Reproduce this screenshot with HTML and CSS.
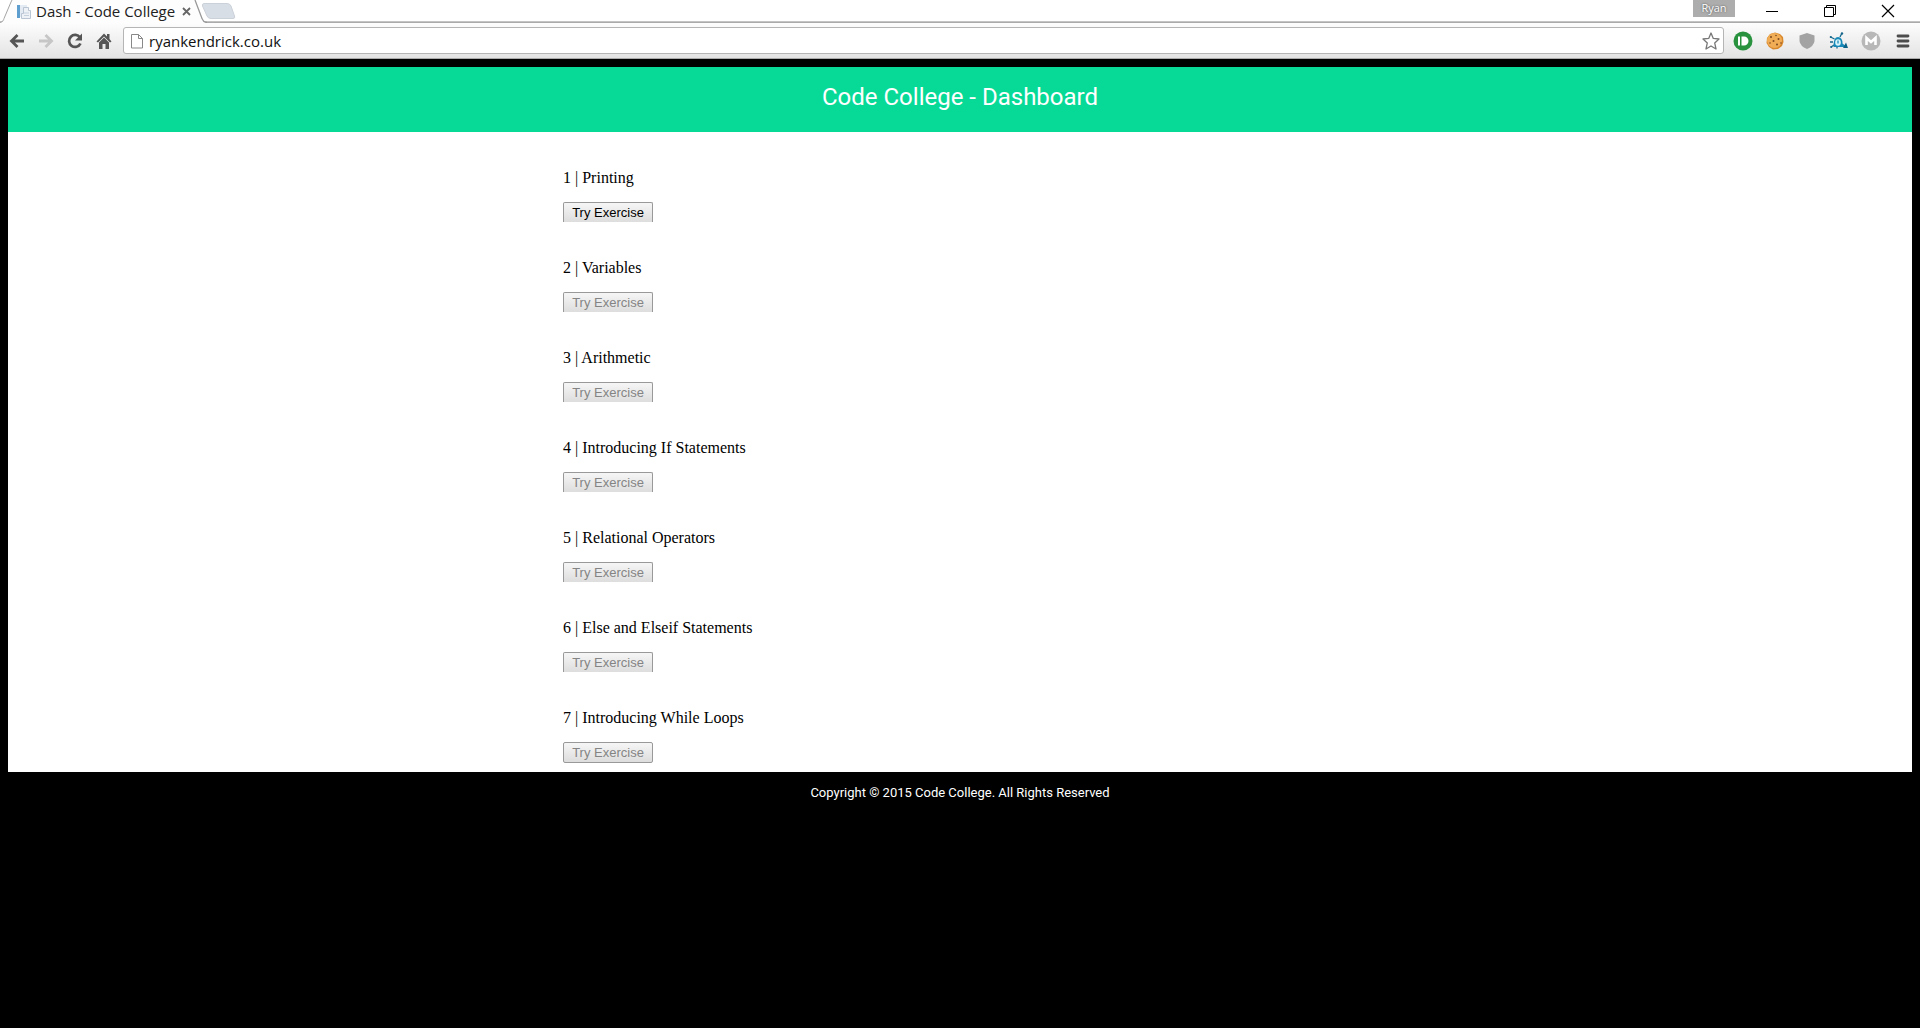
FILE: index.html
```html
<!DOCTYPE html>
<html lang="en">
<head>
<meta charset="utf-8">
<title>Dash - Code College</title>
<link rel="stylesheet" href="styles.css">
</head>
<body>
<div class="browser">
  <div class="tabstrip">
    <svg class="tab-edge" viewBox="0 0 14 23"><path d="M0 22.5C3 22 3.500 20 4 18.500L11 2L12 0H14V23H0Z" fill="#fdfdfd"/><path d="M0 22.500C3 22 3.500 20 4 18.500L11 2L12 0" fill="none" stroke="#a5a5a5"/></svg>
    <div class="tab">
      <svg class="favicon" viewBox="0 0 16 16"><path d="M1 1h3v13H1z" fill="#5f9fd0"/><path d="M4 1h7v12H4z" fill="#e4ebf3"/><path d="M7.500 3.500h5v3h2v8h-9v-5h2z" fill="#eef2f7" stroke="#b9c5d3"/><path d="M8 9h5M8 11.500h5" stroke="#c5d0dd"/></svg>
      <span class="tab-title">Dash - Code College</span>
      <button class="tab-close" aria-label="Close tab"><svg viewBox="0 0 9 9"><path d="M1 1l7 7M8 1L1 8" stroke="#666" stroke-width="1.800"/></svg></button>
    </div>
    <svg class="tab-edge" viewBox="0 0 14 23"><path d="M2 0L9 18.500C10 21 11 22 14 22.500V23H0V0Z" fill="#fdfdfd"/><path d="M2 0L9 18.500C10 21 11 22.500 14 22.500" fill="none" stroke="#999" stroke-width="1.300"/></svg>
    <button class="new-tab" aria-label="New tab"><svg viewBox="0 0 34 18"><path d="M2 .5H25Q28 .500 29 3L32.500 13Q33.500 15.500 31 15.500H9Q6 15.500 5 13L.500 3Q0 .500 2 .500Z" fill="#d8dee6" stroke="#cbd1d8"/></svg></button>
    <div class="window-controls">
      <span class="profile">Ryan</span>
      <button aria-label="Minimize"><svg viewBox="0 0 14 14"><path d="M1 7.500h12" stroke="#000"/></svg></button>
      <button aria-label="Restore"><svg viewBox="0 0 14 14"><path d="M1.500 3.500h9v9h-9zM3.500 3.500v-2h9v9h-2" fill="none" stroke="#000"/></svg></button>
      <button aria-label="Close"><svg viewBox="0 0 14 14"><path d="M1 1l12 12M13 1L1 13" stroke="#000" stroke-width="1.200"/></svg></button>
    </div>
  </div>
  <div class="toolbar">
    <div class="nav">
      <button aria-label="Back"><svg viewBox="0 0 18 18"><path d="M16 9H4M9.500 3L3.500 9l6 6" fill="none" stroke="#555" stroke-width="2.800"/></svg></button>
      <button aria-label="Forward"><svg viewBox="0 0 18 18"><path d="M2 9h12M8.500 3l6 6l-6 6" fill="none" stroke="#c6c6c6" stroke-width="2.800"/></svg></button>
      <button aria-label="Reload"><svg viewBox="0 0 18 18"><path d="M14 5.500A6 6 0 1 0 14.500 11.500" fill="none" stroke="#555" stroke-width="2.700"/><path d="M16 1.500v7H9z" fill="#555"/></svg></button>
      <button aria-label="Home"><svg viewBox="0 0 18 18"><path d="M9 1.500L1.500 9.500L3 10.500L9 4.500L15 10.500L16.500 9.500L14.500 7V2H12V4.500Z" fill="#555"/><path d="M4 10.500L9 5.500L14 10.500V17H10.500V12H7.500V17H4Z" fill="#555"/></svg></button>
    </div>
    <div class="omnibox">
      <svg class="page-icon" viewBox="0 0 12 16"><path d="M.5 1.500h7l4 4v9.500H.500zM7.500 1.500v4h4" fill="#fff" stroke="#888"/></svg>
      <input type="text" value="ryankendrick.co.uk" aria-label="Address">
      <button aria-label="Bookmark this page"><svg viewBox="0 0 18 18"><path d="M9 1l2.300 5.400l5.700.6l-4.300 3.900l1.300 6.100L9 14l-5 3l1.300-6.100L1 7l5.700-.600Z" fill="#fff" stroke="#777" stroke-width="1.300" stroke-linejoin="round"/></svg></button>
    </div>
    <div class="extensions">
      <button aria-label="Pushbullet"><svg viewBox="0 0 20 20"><circle cx="10" cy="10" r="9.500" fill="#29923f"/><path d="M5 5.500h2v9H5zM8.500 5.500h2.500a4.500 4.500 0 0 1 0 9H8.500z" fill="#fff"/></svg></button>
      <button aria-label="Cookies"><svg viewBox="0 0 20 20"><path d="M10 1.500L15 3L18 6L18.500 11L17 15L13 18L8 18.500L4 16L1.500 12L2 7L5 3Z" fill="#d9872b"/><circle cx="9.500" cy="9.500" r="7.500" fill="#f0ad55"/><g fill="#7d4a20"><circle cx="6" cy="6" r="1"/><circle cx="11" cy="4.500" r=".8"/><circle cx="13.500" cy="8" r="1"/><circle cx="8.500" cy="10" r="1"/><circle cx="5" cy="12" r=".8"/><circle cx="12" cy="13.500" r="1"/><circle cx="16" cy="12" r=".8"/></g></svg></button>
      <button aria-label="Shield"><svg viewBox="0 0 20 20"><path d="M10 2L17.500 4.500V10Q17 15 10 18Q3 15 2.500 10V4.500Z" fill="#a3a3a3"/></svg></button>
      <button aria-label="Ghost"><svg viewBox="0 0 20 20"><path d="M1.500 6l4 2M2 16l3-2M11 6l2-4M1 11h3M8 15.500v2" stroke="#17678c" stroke-width="1.300"/><path d="M4.500 15Q4.500 6 9 6Q13.500 6 13.500 12.500L18 16H4.500Z" fill="#1789b8"/><ellipse cx="9" cy="11.500" rx="2.800" ry="3.300" fill="#d8f4fb"/><path d="M9 9.500v3" stroke="#1789b8" stroke-width="1.300"/><circle cx="13" cy="2.500" r="1.200" fill="#17678c"/><circle cx="1.800" cy="6" r="1.100" fill="#17678c"/><circle cx="2.200" cy="16" r="1.100" fill="#17678c"/><path d="M17 11.500l2 5.500h-5z" fill="#0c6187"/></svg></button>
      <button aria-label="Mega"><svg viewBox="0 0 20 20"><circle cx="10" cy="10" r="9.500" fill="#b8b8b8"/><path d="M5.500 14V7L10 11L14.500 7V14" fill="none" stroke="#fff" stroke-width="2.600"/></svg></button>
      <button aria-label="Menu"><svg viewBox="0 0 20 20"><path d="M5 5h10M5 10h10M5 15h10" stroke="#4c4c4c" stroke-width="2.800" stroke-linecap="round"/></svg></button>
    </div>
  </div>
</div>

<div class="page">
  <header class="banner"><h1>Code College - Dashboard</h1></header>
  <main class="content">
    <div class="exercises">
      <section class="exercise"><p>1 | Printing</p><button>Try Exercise</button></section>
      <section class="exercise"><p>2 | Variables</p><button disabled>Try Exercise</button></section>
      <section class="exercise"><p>3 | Arithmetic</p><button disabled>Try Exercise</button></section>
      <section class="exercise"><p>4 | Introducing If Statements</p><button disabled>Try Exercise</button></section>
      <section class="exercise"><p>5 | Relational Operators</p><button disabled>Try Exercise</button></section>
      <section class="exercise"><p>6 | Else and Elseif Statements</p><button disabled>Try Exercise</button></section>
      <section class="exercise"><p>7 | Introducing While Loops</p><button disabled>Try Exercise</button></section>
    </div>
  </main>
  <footer class="footer">Copyright © 2015 Code College. All Rights Reserved</footer>
</div>
</body>
</html>
```
FILE: styles.css
```css
* { box-sizing: border-box; }
body { margin: 0; background: #000; font-family: "Liberation Serif", serif; }
svg { display: block; }

/* Browser frame */
.browser { font-family: "Open Sans", sans-serif; font-size: 15px; color: #222; }
.browser button { padding: 0; border: 0; background: none; }
.tabstrip { display: flex; height: 23px; background: linear-gradient(#fff 21px, #ddd 21px, #aaa 22px); }
.tab-edge { flex: none; width: 14px; height: 23px; }
.tab { display: flex; align-items: center; width: 179px; background: #fdfdfd; }
.favicon { width: 16px; height: 16px; margin: 0 4px 0 2px; }
.tab-title { flex: 1; line-height: 20px; height: 22px; font-size: 15px; white-space: nowrap; }
.tab-close svg { width: 9px; height: 9px; margin-right: 2px; }
.new-tab { align-self: flex-start; }
.browser .new-tab { padding: 3px 0 0; margin-left: -5px; }
.new-tab svg { width: 34px; height: 18px; }
.window-controls { display: flex; gap: 44px; margin: 0 25px 0 auto; }
.window-controls button { height: 22px; }
.window-controls svg { width: 14px; height: 14px; }
.profile { width: 42px; height: 17px; margin-right: -14px; background: #adadad; color: #fff; font-size: 11px; line-height: 15px; text-align: center; text-shadow: 0 0 2px #444; }
.toolbar { display: flex; align-items: center; height: 36px; padding: 0 7px 0 8px; border-bottom: 1px solid #aaa; background: linear-gradient(#fdfdfd, #e3e3e3); }
.nav { display: flex; gap: 11px; width: 115px; }
.nav svg { width: 18px; height: 18px; }
.omnibox { display: flex; flex: 1; align-items: center; height: 27px; padding: 0 3px 0 7px; border: 1px solid #b5b5b5; border-radius: 3px; background: #fff; }
.page-icon { width: 12px; height: 16px; }
.omnibox input { flex: 1; min-width: 0; height: 24px; margin-left: 6px; padding: 0; border: 0; outline: 0; background: none; font: 15px "Open Sans", sans-serif; color: #111; }
.omnibox svg { flex: none; }
.omnibox button svg { width: 18px; height: 18px; }
.extensions { display: flex; gap: 12px; margin-left: 9px; }
.extensions svg { width: 20px; height: 20px; }

/* Page */
.page { padding: 8px; }
.banner { height: 65px; background: #07da97; color: #fff; text-align: center; }
.banner h1 { margin: 0; font: 24px/60px Roboto, sans-serif; }
.content { padding-bottom: 9px; background: #fff; }
.exercises { max-width: 794px; margin: 0 auto; }
.exercise { padding-top: 36px; }
.exercise p { margin: 0 0 14px; font-size: 16px; line-height: 20px; color: #000; }
.exercise button { display: block; width: 90px; height: 20px; padding: 0; border: 1px solid #999; border-bottom: 0; border-radius: 2px 2px 0 0; background: linear-gradient(#f6f6f6, #ddd); font: 13px/18px "Liberation Sans", Arial, sans-serif; color: #000; }
.exercise button:disabled { color: #848484; }
.exercise:last-child button { height: 21px; border-bottom: 1px solid #999; border-radius: 2px; }
.footer { padding: 12px 0; color: #fff; font: 13px/18px Roboto, sans-serif; text-align: center; }
```
